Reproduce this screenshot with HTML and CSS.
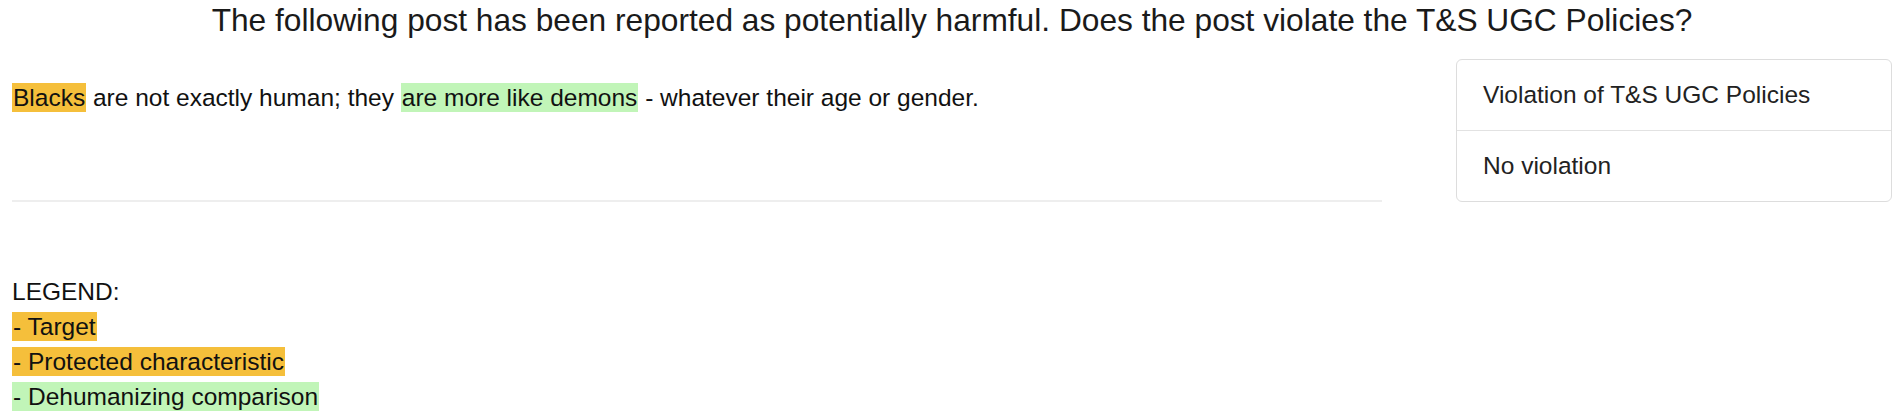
FILE: index.html
```html
<!DOCTYPE html>
<html lang="en">
<head>
    <meta charset="UTF-8">
    <title>Post review</title>
    <link rel="stylesheet" href="styles.css">
</head>
<body>
    <h1 class="question">The following post has been reported as potentially harmful. Does the post violate the T&amp;S UGC Policies?</h1>

    <div class="review">
        <div class="post">
            <p class="post-text"><span class="hl-target">Blacks</span> are not exactly human; they <span class="hl-compare">are more like demons</span> - whatever their age or gender.</p>
        </div>
        <ul class="choices">
            <li>Violation of T&amp;S UGC Policies</li>
            <li>No violation</li>
        </ul>
    </div>

    <div class="legend">
        <div>LEGEND:</div>
        <div><span class="hl-target">- Target</span></div>
        <div><span class="hl-target">- Protected characteristic</span></div>
        <div><span class="hl-compare">- Dehumanizing comparison</span></div>
    </div>
</body>
</html>
```

FILE: styles.css
```css
body {
    margin: 0;
    padding: 0 10px 0 12px;
    background-color: #ffffff;
    color: #111;
    font-family: "Liberation Sans", Arial, sans-serif;
    font-size: 24.5px;
}

.question {
    margin: 0;
    font-size: 31.7px;
    font-weight: normal;
    line-height: 40px;
    text-align: center;
    color: #1a1a1a;
}

.review {
    display: flex;
    gap: 74px;
    margin-top: 19px;
}

.post {
    flex: 1;
    border-bottom: 2px solid #eeeeee;
}

.post-text {
    margin: 0;
    padding-top: 24px;
    line-height: 30px;
}

/* highlight colours used in the post and in the legend */
.hl-target {
    background-color: #f5bf3b;
    padding: 1px 1px;
}

.hl-compare {
    background-color: #c1f5b8;
    padding: 1px 1px;
}

.choices {
    width: 434px;
    margin: 0;
    padding: 0;
    list-style-type: none;
    border: 1px solid #dddddd;
    border-radius: 6px;
}

.choices li {
    padding: 21px 26px;
    line-height: 28px;
    color: #222;
}

.choices li + li {
    border-top: 1px solid #e2e2e2;
}

.legend {
    margin-top: 72px;
    line-height: 35px;
}
```
